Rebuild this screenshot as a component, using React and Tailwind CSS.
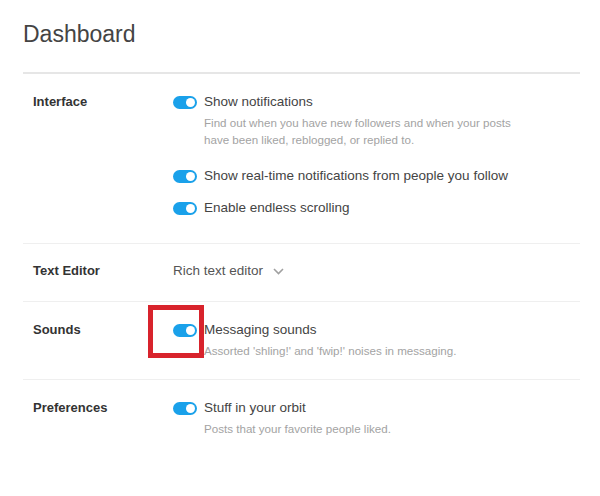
import React from "react";

const Toggle = () => (
  <span className="relative inline-flex w-[24px] h-[13px] shrink-0 rounded-full bg-[#1aa1ea]">
    <span className="absolute right-[2px] top-[2px] w-[9px] h-[9px] rounded-full bg-white" />
  </span>
);

const Option = ({ title, desc, marked, className = "" }) => (
  <div className={className}>
    <div className="flex items-center h-[20px]">
      <div className="relative flex items-center">
        <Toggle />
        {marked && (
          <span className="absolute left-[-25px] top-[-19px] w-[56px] h-[53px] border-[5px] border-[#d8232c]" />
        )}
      </div>
      <span className="ml-[7px] text-[13.5px] text-[#444]">{title}</span>
    </div>
    {desc && (
      <p className="mt-[2px] ml-[31px] w-[320px] text-[11.6px] leading-[17px] text-[#a3a3a3]">
        {desc}
      </p>
    )}
  </div>
);

const Row = ({ label, children, className = "" }) => (
  <div className={"flex " + className}>
    <div className="w-[150px] shrink-0 pl-[10px] text-[13px] font-bold leading-[20px] text-[#333]">
      {label}
    </div>
    <div className="flex-1">{children}</div>
  </div>
);

export default function App() {
  return (
    <div className="w-[600px] h-[496px] bg-white pl-[23px] pt-[20px] [font-family:'Liberation_Sans',Arial,sans-serif]">
      <h1 className="text-[23px] leading-[28px] text-[#444]">Dashboard</h1>

      <div className="mt-[24px] w-[557px] border-t-2 border-[#e6e6e6]">
        <Row label="Interface" className="pt-[18px] pb-[25px] border-b border-[#efefef]">
          <Option
            title="Show notifications"
            desc="Find out when you have new followers and when your posts have been liked, reblogged, or replied to."
            className="mb-[18px]"
          />
          <Option title="Show real-time notifications from people you follow" className="mb-[12px]" />
          <Option title="Enable endless scrolling" />
        </Row>

        <Row label="Text Editor" className="pt-[17px] pb-[20px] border-b border-[#efefef]">
          <div className="flex items-center h-[20px] text-[13.5px] text-[#555]">
            Rich text editor
            <svg className="ml-[10px]" width="11" height="7" viewBox="0 0 11 7" fill="none">
              <path d="M1 1l4.5 4.5L10 1" stroke="#a0a0a0" strokeWidth="1.6" />
            </svg>
          </div>
        </Row>

        <Row label="Sounds" className="pt-[18px] pb-[20px] border-b border-[#efefef]">
          <Option
            title="Messaging sounds"
            desc="Assorted 'shling!' and 'fwip!' noises in messaging."
            marked
          />
        </Row>

        <Row label="Preferences" className="pt-[18px]">
          <Option title="Stuff in your orbit" desc="Posts that your favorite people liked." />
        </Row>
      </div>
    </div>
  );
}
